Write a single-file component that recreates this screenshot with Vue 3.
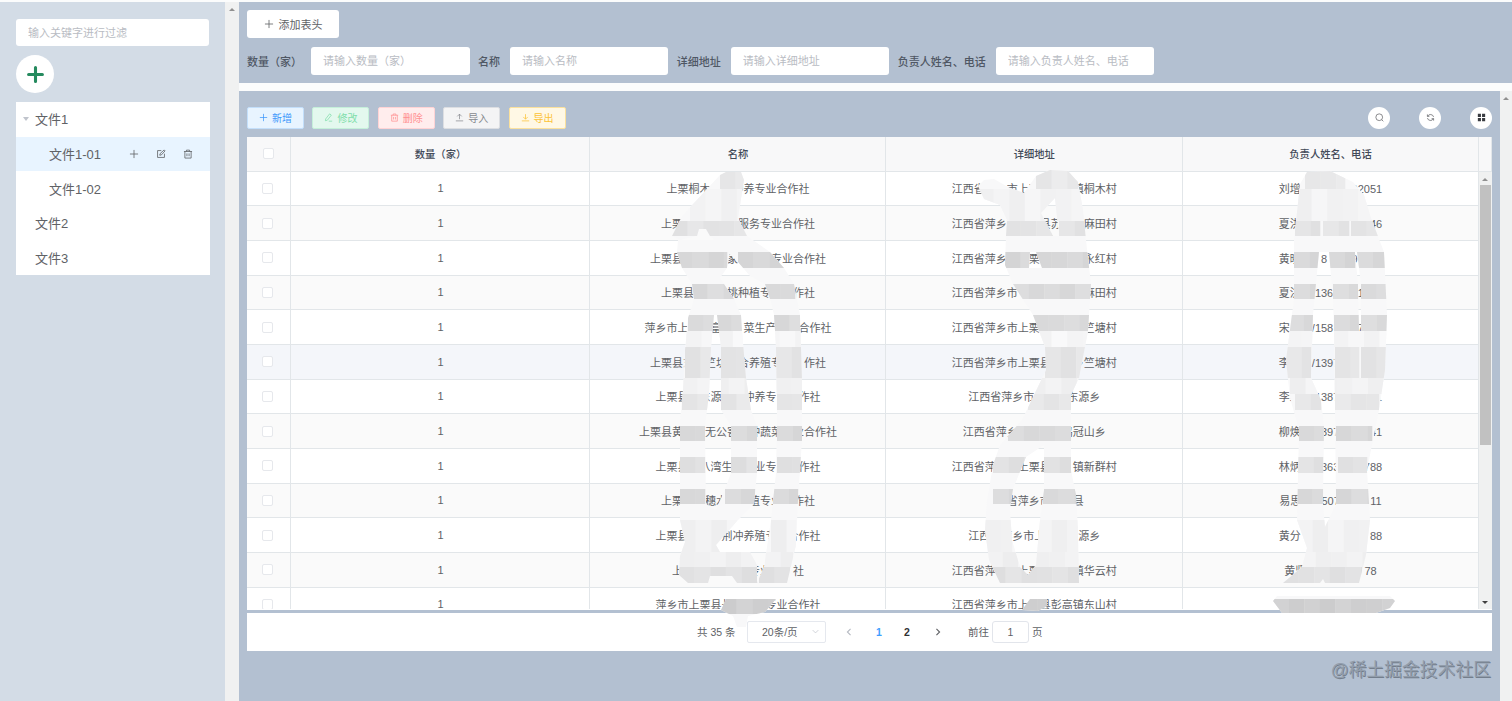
<template>
  <div class="layout">
    <aside class="sidebar">
      <input class="filter" placeholder="输入关键字进行过滤" />
      <button class="round-add">
        <svg viewBox="0 0 16 16"><path d="M8 1.5v13M1.5 8h13" /></svg>
      </button>
      <ul class="tree">
        <li
          v-for="node in tree"
          :key="node.label"
          :class="{ child: node.child, active: node.active }"
        >
          <i v-if="node.open" class="caret"></i>
          <span class="node-label">{{ node.label }}</span>
          <span v-if="node.active" class="node-tools">
            <svg v-for="n in ['plus', 'edit', 'trash']" :key="n" viewBox="0 0 16 16">
              <path :d="icons[n]" />
            </svg>
          </span>
        </li>
      </ul>
    </aside>
    <div class="track side-track"><i class="arrow up"></i></div>

    <main class="main">
      <header class="search">
        <button class="add-head">
          <svg viewBox="0 0 16 16"><path :d="icons.plus" /></svg>添加表头
        </button>
        <div class="fields">
          <label v-for="f in fields" :key="f.label">
            <span :style="{ width: f.width + 'px' }">{{ f.label }}</span>
            <input :placeholder="'请输入' + f.label" />
          </label>
        </div>
      </header>

      <div class="body">
        <section class="content">
          <div class="toolbar">
            <button v-for="b in buttons" :key="b.text" class="btn" :class="b.type">
              <svg viewBox="0 0 16 16"><path :d="icons[b.icon]" /></svg>{{ b.text }}
            </button>
            <div class="round-tools">
              <button><svg viewBox="0 0 16 16"><path :d="icons.search" /></svg></button>
              <button><svg viewBox="0 0 16 16"><path :d="icons.refresh" /></svg></button>
              <button>
                <svg viewBox="0 0 16 16" class="solid"><path :d="icons.grid" /></svg>
              </button>
            </div>
          </div>

          <div class="table">
            <div class="tr th">
              <div><i class="check"></i></div>
              <div v-for="f in fields" :key="f.label">{{ f.label }}</div>
              <div></div>
            </div>
            <div class="table-body">
              <div class="rows">
                <div
                  v-for="(row, i) in rows"
                  :key="i"
                  class="tr"
                  :class="{ striped: i % 2, hover: i === 5 }"
                >
                  <div><i class="check"></i></div>
                  <div>1</div>
                  <div v-for="(cell, c) in row" :key="c">{{ cell }}</div>
                </div>
              </div>
              <div class="track inner-track">
                <i class="arrow up"></i>
                <span class="thumb"></span>
                <i class="arrow down"></i>
              </div>
            </div>

            <!-- mosaic over private data -->
            <svg class="mosaic" viewBox="247 137 1245 495">
              <defs>
                <clipPath id="strokes">
                  <path v-for="(p, i) in strokes" :key="i" :d="p" clip-rule="evenodd" />
                </clipPath>
              </defs>
              <g clip-path="url(#strokes)">
                <rect x="600" y="165" width="850" height="470" fill="#f8f8f9" />
                <rect
                  v-for="(t, i) in tiles"
                  :key="i"
                  :x="t.x"
                  :y="t.y"
                  :width="t.w"
                  :height="t.h"
                  :fill="t.fill"
                />
              </g>
            </svg>
          </div>

          <footer class="pager">
            <span class="total">共 35 条</span>
            <span class="size">
              20条/页
              <svg viewBox="0 0 16 16"><path d="M3 5.5l5 5 5-5" /></svg>
            </span>
            <svg class="prev" viewBox="0 0 16 16"><path d="M10.5 3l-5 5 5 5" /></svg>
            <b class="page current">1</b>
            <b class="page">2</b>
            <svg class="next" viewBox="0 0 16 16"><path d="M5.5 3l5 5-5 5" /></svg>
            <span>前往</span>
            <span class="jump">1</span>
            <span>页</span>
          </footer>
        </section>
        <div class="track page-track"><i class="arrow up"></i></div>
      </div>
    </main>
    <div class="watermark">@稀土掘金技术社区</div>
  </div>
</template>

<script setup>
const tree = [
  { label: "文件1", open: true },
  { label: "文件1-01", child: true, active: true },
  { label: "文件1-02", child: true },
  { label: "文件2" },
  { label: "文件3" },
];

const fields = [
  { label: "数量（家）", width: 64 },
  { label: "名称", width: 32 },
  { label: "详细地址", width: 54 },
  { label: "负责人姓名、电话", width: 98 },
];

const buttons = [
  { text: "新增", type: "primary", icon: "plus" },
  { text: "修改", type: "success", icon: "pen" },
  { text: "删除", type: "danger", icon: "trash" },
  { text: "导入", type: "info", icon: "upload" },
  { text: "导出", type: "warning", icon: "download" },
];

const icons = {
  plus: "M8 1.5v13M1.5 8h13",
  edit: "M8.5 2.5h-6v11h11v-6M6 10l.5-2.5L13 1.5l1.5 1.5L8.5 9.5z",
  trash: "M1.5 4h13M5.5 4V1.8h5V4M3 4v10.5h10V4M6.3 7v4.5M9.7 7v4.5",
  pen: "M3 10.5L10 1.5l3 2.3-7 9-3.5 1zM8.5 14.5h6",
  upload: "M8 11V2M4 6l4-4 4 4M1.5 14h13",
  download: "M8 2v9M4 7l4 4 4-4M1.5 14h13",
  search: "M12 12l2.8 2.8M13.5 7.5a6 6 0 1 1-12 0 6 6 0 0 1 12 0",
  refresh:
    "M2.5 6V2.5M2.5 6H6M2.8 6A5.7 5.7 0 0 1 13.5 7M13.5 10v3.5M13.5 10H10M13.2 10A5.7 5.7 0 0 1 2.5 9",
  grid: "M1.5 1.5H7V7H1.5zM9 1.5h5.5V7H9zM1.5 9H7v5.5H1.5zM9 9h5.5v5.5H9z",
};

// "_" is a hidden character, "." a hidden digit (two spaces are one digit wide)
const mask = (s) => s.replace(/_/g, "\u3000").replace(/\./g, "  ");

const rows = [
  ["上栗桐木__冲养专业合作社", "江西省__市上栗___镇桐木村", "刘增_/......92051"],
  ["上栗__家__服务专业合作社", "江西省萍乡市__县苏__麻田村", "夏洪_/.3....1..46"],
  ["上栗县____家___专业合作社", "江西省萍乡__栗____永红村", "黄晓_/.8....9...."],
  ["上栗县___桃种植专__作社", "江西省萍乡市______麻田村", "夏洪_/136....1..."],
  ["萍乡市上__富__菜生产__合作社", "江西省萍乡市上栗____竺塘村", "宋__/158....7..."],
  ["上栗县东_竺坊_合养殖专__作社", "江西省萍乡市上栗县__乡竺塘村", "李__/1397...8..."],
  ["上栗县_东源__冲养专__作社", "江西省萍乡市___东源乡", "李红_/1387......1"],
  ["上栗县黄__无公害_种蔬菜_业合作社", "江西省萍乡____鸡冠山乡", "柳焕_/1397.....41"],
  ["上栗县_八湾生__业专__作社", "江西省萍__上栗县__镇新群村", "林炳_/1363....788"],
  ["上栗__穗水__植专业_作社", "__省萍乡市__县", "易思_/1507.....11"],
  ["上栗县___荆冲养殖专_合作社", "江西省萍乡市上__东源乡", "黄分_/.........88"],
  ["上______专业__社", "江西省萍__上栗___镇华云村", "黄坚/.........78"],
  ["萍乡市上栗县长___专业合作社", "江西省萍乡市上栗县彭高镇东山村", ""],
].map((row) => row.map(mask));

const strokes = [
  // name column
  "M720 175L726 172 741 172 744 180 738 218 747 236 770 252 784 268 794 284 800 315 802 380 802 440 798 500 796 545 787 583 757 583 764 567 771 520 776 473 777 420 776 347 774 315 770 299 765 284 750 276 738 262 727 252 710 236 706 229 699 229 697 236 680 240 672 236 682 216 694 203z",
  "M678 240L720 240 730 252 727 268 720 278 734 299 741 315 742 331 746 378 751 410 757 426 757 473 754 504 738 520 716 545 720 552 750 552 757 565 757 583 737 583 732 576 710 576 708 583 688 583 679 575 680 556 685 542 680 520 680 420 683 390 685 350 688 318 694 299 692 284 682 268 677 252z" +
    "M714 315L717 315 721 347 721 410 731 426 731 473 725 489 716 510 706 504 705 426 709 394 711 347z",
  "M721 610L726 599 776 599 765 612 748 616 746 627 737 627 733 616z",
  // address column
  "M978 186L984 180 994 179 1008 187 1024 193 1036 176 1050 170 1068 171 1078 182 1083 210 1086 240 1091 284 1088 331 1079 378 1071 395 1071 470 1076 495 1078 530 1079 583 1000 583 989 560 985 530 987 500 993 465 1000 445 1022 420 1034 395 1046 370 1045 347 1033 315 1013 284 1005 265 1006 236 1007 220 1000 205 984 199z" +
    "M1041 213L1055 198 1059 236 1053 236z" +
    "M1030 252L1036 252 1042 268 1029 268z" +
    "M1026 457L1044 445 1044 490 1040 520 1036 565 1028 575 1020 567 1012 540 1010 510 1013 489z",
  "M1022 610L1030 599 1047 599 1047 606 1038 611z",
  // contact column
  "M1300 184L1307 172 1330 171 1353 182 1364 195 1371 218 1384 252 1387 315 1385 370 1379 410 1367 470 1370 520 1366 555 1359 583 1325 583 1323 579 1320 583 1283 583 1302 567 1307 548 1297 520 1299 430 1290 398 1286 360 1294 299 1294 240z" +
    "M1319 252L1329 252 1333 299 1334 331 1335 410 1336 504 1325 527 1323 504 1324 426 1321 400 1311 378 1313 315z" +
    "M1355 252L1357 252 1361 284 1361 331 1359 331 1358 284z",
  "M1273 601L1277 596 1390 596 1395 601 1390 608 1376 613 1282 613z",
];

// horizontal runs of darker tiles: y, height, [from, to] pairs, lightness
const runs = [
  [170, 19, [720, 744, 1036, 1078, 1305, 1345], 232],
  [189, 32, [690, 745, 978, 1084, 1296, 1373], 242],
  [221, 15, [672, 747, 1005, 1053, 1059, 1086, 1295, 1320, 1323, 1349, 1351, 1378], 227],
  [252, 16, [677, 727, 738, 784, 1005, 1030, 1036, 1089, 1294, 1319, 1329, 1355, 1357, 1385], 215],
  [284, 15, [692, 735, 765, 795, 1013, 1091, 1294, 1319, 1333, 1358, 1361, 1387], 218],
  [315, 16, [688, 714, 716, 742, 774, 800, 1033, 1090, 1288, 1313, 1334, 1359, 1361, 1387], 218],
  [331, 16, [686, 804, 1036, 1090, 1286, 1388], 245],
  [347, 31, [685, 711, 721, 746, 776, 802, 1045, 1086, 1286, 1311, 1335, 1359, 1361, 1386], 228],
  [378, 16, [682, 804, 1030, 1080, 1290, 1386], 241],
  [394, 16, [682, 709, 721, 751, 777, 802, 1028, 1071, 1295, 1321, 1335, 1379], 230],
  [426, 15, [680, 705, 731, 757, 777, 802, 1008, 1071, 1299, 1324, 1336, 1372], 217],
  [457, 16, [680, 705, 731, 757, 777, 802, 993, 1026, 1044, 1071, 1298, 1323, 1338, 1367], 224],
  [489, 15, [680, 705, 725, 755, 773, 798, 993, 1013, 1043, 1076, 1297, 1323, 1336, 1370], 217],
  [520, 32, [680, 737, 771, 796, 985, 1012, 1036, 1078, 1297, 1371], 241],
  [552, 15, [679, 757, 765, 793, 987, 1080, 1300, 1368], 240],
  [567, 16, [679, 757, 759, 790, 990, 1080, 1283, 1362], 225],
  [599, 15, [721, 777, 1022, 1048, 1273, 1395], 207],
];

const shade = [0, 3, -2, 2, -3, 4, -1];
const tiles = runs.flatMap(([y, h, spans, base]) => {
  const out = [];
  for (let i = 0; i < spans.length; i += 2) {
    for (let x = spans[i], n = 0; x < spans[i + 1]; x += 15.6, n++) {
      const v = base + shade[(n + i + y) % shade.length];
      out.push({
        x,
        y,
        w: Math.min(15.6, spans[i + 1] - x) + 0.3,
        h,
        fill: `rgb(${v}, ${v}, ${v + 1})`,
      });
    }
  }
  return out;
});
</script>

<style>
body {
  overflow: hidden;
  background: #fbfcfc;
}
</style>

<style scoped>
.layout {
  position: relative;
  display: flex;
  width: 1512px;
  height: 701px;
  padding-top: 2px;
  box-sizing: border-box;
  font: 11px "Liberation Sans", "Noto Sans CJK SC", sans-serif;
  color: #606266;
}

.layout * {
  box-sizing: border-box;
}

button,
input {
  font: inherit;
  border: 0;
  padding: 0;
  background: #fff;
  color: inherit;
}

svg {
  fill: none;
  stroke: currentColor;
  stroke-width: 1.3;
}

.sidebar {
  width: 225px;
  padding: 17px 16px;
  background: #d3dce6;
}

.filter {
  display: block;
  width: 193px;
  height: 27px;
  padding-left: 12px;
  border-radius: 3px;
}

input::placeholder {
  color: #b9bcc3;
  opacity: 1;
}

.round-add {
  display: flex;
  align-items: center;
  justify-content: center;
  width: 38px;
  height: 38px;
  margin: 9px 0;
  border-radius: 50%;
  color: #258a5e;
}

.round-add svg {
  width: 17px;
  stroke-width: 2.9;
  stroke-linecap: round;
}

.tree {
  width: 194px;
  margin: 0;
  padding: 0;
  list-style: none;
  background: #fff;
}

.tree li {
  display: flex;
  align-items: center;
  height: 34.7px;
  padding: 0 0 1px 19px;
  font-size: 13px;
}

.tree li.child {
  padding-left: 33px;
}

.tree li.active {
  background: #e8f4ff;
}

.caret {
  margin: 0 6px 0 -12px;
  border: 3px solid transparent;
  border-top: 4.5px solid #c0c4cc;
  border-bottom: 0;
}

.node-tools {
  display: flex;
  gap: 17px;
  margin-left: 28px;
}

.node-tools svg {
  width: 10px;
}

.track {
  display: flex;
  flex-direction: column;
  align-items: center;
  background: #f0f1f1;
}

.side-track {
  width: 14px;
  padding-top: 6px;
}

.arrow {
  width: 0;
  height: 0;
  border: 3px solid transparent;
}

.arrow.up {
  border-top: 0;
  border-bottom: 3.5px solid #909090;
}

.arrow.down {
  border-bottom: 0;
  border-top: 3.5px solid #404040;
}

.main {
  display: flex;
  flex: 1;
  flex-direction: column;
}

.search {
  height: 81px;
  padding: 8px;
  background: #b3c0d1;
}

.add-head {
  display: flex;
  align-items: center;
  justify-content: center;
  gap: 5px;
  width: 92px;
  height: 28px;
  border-radius: 3px;
}

.add-head svg {
  width: 10px;
}

.fields {
  display: flex;
  gap: 8.4px;
  margin-top: 9px;
}

.fields label {
  display: flex;
  align-items: center;
}

.fields span {
  flex: none;
  padding-bottom: 1px;
  font-weight: 500;
  color: #4f5764;
  white-space: nowrap;
}

.fields input {
  width: 158.5px;
  height: 28px;
  padding-left: 12px;
  border-radius: 3px;
}

.body {
  display: flex;
  flex: 1;
  margin-top: 8px;
}

.content {
  width: 1261px;
  padding: 15px 8px 0;
  background: #b3c0d1;
}

.page-track {
  flex: 1;
  padding-top: 6px;
}

.toolbar {
  display: flex;
  align-items: center;
  gap: 8.4px;
  height: 23px;
  margin-bottom: 8px;
}

.btn {
  display: flex;
  align-items: center;
  justify-content: center;
  gap: 4px;
  width: 57px;
  height: 22px;
  border: 1px solid;
  border-radius: 2px;
  font-size: 10px;
}

.btn svg {
  width: 9px;
}

.btn.primary {
  color: #3d97fb;
  background: #e8f4ff;
  border-color: #c3dffb;
}

.btn.success {
  color: #7fdeaa;
  background: #e3f8ee;
  border-color: #c5f0da;
}

.btn.danger {
  color: #ff9092;
  background: #ffeded;
  border-color: #ffd3d5;
}

.btn.info {
  color: #86898f;
  background: #f4f4f5;
  border-color: #dcdee2;
}

.btn.warning {
  color: #fcc234;
  background: #fff8e5;
  border-color: #fbe19d;
}

.round-tools {
  display: flex;
  gap: 29px;
  margin-left: auto;
}

.round-tools button {
  display: flex;
  align-items: center;
  justify-content: center;
  width: 22px;
  height: 22px;
  border-radius: 50%;
}

.round-tools svg {
  width: 9px;
}

.round-tools .solid {
  fill: #383b40;
  stroke: none;
}

.table {
  position: relative;
  width: 1245px;
  height: 473px;
  background: #fff;
}

.tr {
  display: grid;
  grid-template-columns: 44px 299px 296px 296.5px 296px;
  height: 34.67px;
}

.tr > div {
  display: flex;
  align-items: center;
  justify-content: center;
  padding-left: 1px;
  border-right: 1px solid #e2e6e9;
  border-bottom: 1px solid #e2e6e9;
  white-space: pre;
}

.th {
  grid-template-columns: 44px 299px 296px 296.5px 296px 13.5px;
  background: #f8f8f9;
  font-size: 10.3px;
  font-weight: 500;
  color: #424a58;
}

.table-body {
  display: flex;
  height: 437.8px;
  overflow: hidden;
}

.striped {
  background: #fafafa;
}

.hover {
  background: #f4f6fa;
}

.check {
  width: 11px;
  height: 11px;
  margin-right: 4px;
  border: 1px solid #e6e8ec;
  border-radius: 2px;
  background: #fff;
}

.th .check {
  margin-right: 1px;
}

.inner-track {
  width: 13.5px;
  padding: 6px 0 5px;
}

.thumb {
  width: 11px;
  height: 260px;
  margin-top: 4px;
  background: #c1c1c1;
}

.inner-track .down {
  margin-top: auto;
}

.mosaic {
  position: absolute;
  top: 0;
  left: 0;
  z-index: 1;
  width: 1245px;
  height: 495px;
  stroke: none;
  pointer-events: none;
}

.pager {
  display: flex;
  align-items: center;
  height: 38px;
  margin-top: 3px;
  padding: 0 0 1px 450px;
  background: #fff;
  font-size: 10.5px;
}

.total {
  width: 50px;
}

.size {
  display: flex;
  align-items: center;
  justify-content: space-between;
  width: 79px;
  height: 22px;
  padding: 0 5px 0 14px;
  border: 1px solid #e5e8ee;
  border-radius: 2px;
}

.size svg {
  width: 9px;
  color: #c0c4cc;
}

.prev,
.next {
  width: 10px;
  stroke-width: 1.8;
}

.prev {
  margin-left: 18px;
  color: #b6bac2;
}

.next {
  margin-right: 25px;
}

.page {
  width: 28px;
  text-align: center;
  color: #303133;
}

.page.current {
  margin-left: 11px;
  color: #409eff;
}

.page:not(.current) {
  margin-right: 12px;
}

.jump {
  width: 37px;
  height: 22px;
  margin: 0 3px;
  border: 1px solid #e2e5eb;
  border-radius: 3px;
  text-align: center;
  line-height: 20px;
}

.watermark {
  position: absolute;
  right: 21px;
  bottom: 17px;
  font-size: 17.8px;
  line-height: 27px;
  color: #929dab;
  text-shadow: 0.7px 0.7px 0 #737e8c;
}
</style>
